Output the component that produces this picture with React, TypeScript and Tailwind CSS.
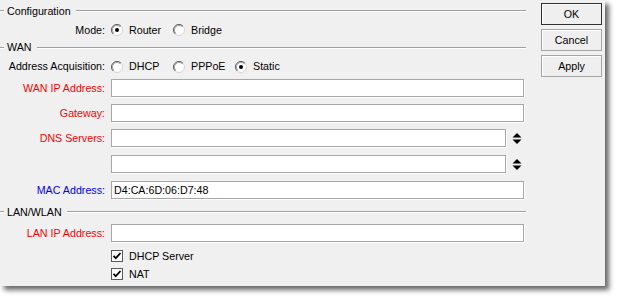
import React from "react";

function Radio({ checked }: { checked?: boolean }) {
  return (
    <svg width="12" height="12" viewBox="0 0 12 12" className="shrink-0">
      <circle cx="6" cy="6" r="5.5" fill="#ffffff" stroke="#d4d4d4" />
      <path d="M 2.1 9.9 A 5.5 5.5 0 0 1 9.9 2.1" stroke="#5a5a5a" strokeWidth="1" fill="none" />
      <path d="M 2.8 9.2 A 4.5 4.5 0 0 1 9.2 2.8" stroke="#a0a0a0" strokeWidth="1" fill="none" />
      {checked && <circle cx="6" cy="6" r="2" fill="#000000" />}
    </svg>
  );
}

function Check() {
  return (
    <div className="w-[12px] h-[12px] bg-white border border-[#5a5a5a] shrink-0 flex items-center justify-center">
      <svg width="10" height="10" viewBox="0 0 10 10">
        <path d="M1.5 4.8 L3.8 7.2 L8.5 2" stroke="#000" strokeWidth="1.8" fill="none" />
      </svg>
    </div>
  );
}

function Spin() {
  return (
    <svg width="10" height="13" viewBox="0 0 10 13" className="shrink-0">
      <polygon points="0.5,5.5 5,1 9.5,5.5" fill="#000" />
      <polygon points="0.5,7.5 5,12 9.5,7.5" fill="#000" />
    </svg>
  );
}

function Header({ title, h, mt = "" }: { title: string; h: string; mt?: string }) {
  return (
    <div className={`flex items-center ${h} ${mt}`}>
      <div className="w-[4px] border-t border-b border-t-[#a0a0a0] border-b-white" />
      <span className="pl-[3px] pr-[5px] text-black leading-none">{title}</span>
      <div className="flex-1 border-t border-b border-t-[#a0a0a0] border-b-white" />
    </div>
  );
}

function Field({
  label,
  color,
  mt,
  value,
  spin,
}: {
  label: string;
  color: string;
  mt: string;
  value?: string;
  spin?: boolean;
}) {
  return (
    <div className={`flex items-center h-[18px] ${mt}`}>
      <div className={`w-[106px] text-right pr-[1px] ${color} leading-none`}>{label}</div>
      <div className="w-[5px]" />
      {spin ? (
        <div className="flex items-center">
          <div className="w-[395px] h-[18px] bg-white border border-[#a7a7a7] shadow-[1px_1px_0_#ffffff]" />
          <div className="w-[6px]" />
          <Spin />
        </div>
      ) : (
        <div className="w-[413px] h-[18px] bg-white border border-[#a7a7a7] shadow-[1px_1px_0_#ffffff] flex items-center pl-[2px] text-black leading-none">
          {value}
        </div>
      )}
    </div>
  );
}

function Opt({ label, checked, w = "w-[62px]" }: { label: string; checked?: boolean; w?: string }) {
  return (
    <div className={`flex items-center gap-[6px] ${w}`}>
      <Radio checked={checked} />
      <span className="leading-none">{label}</span>
    </div>
  );
}

function Btn({ label, def }: { label: string; def?: boolean }) {
  return (
    <div
      className={`w-[61px] h-[22px] flex items-center justify-center bg-[#efefef] border ${
        def ? "border-[#303030]" : "border-[#a5a5a5]"
      } shadow-[inset_1px_1px_0_#ffffff] text-black leading-none`}
    >
      {label}
    </div>
  );
}

export default function App() {
  return (
    <div className="w-[620px] h-[301px] bg-white font-['Liberation_Sans',Arial,sans-serif] text-[10.7px] text-black">
      <div className="w-[605px] h-[286px] bg-[#f0f0f0] shadow-[4px_4px_5px_rgba(0,0,0,0.6)] flex">
        <div className="w-[526px] flex flex-col">
          <Header title="Configuration" h="h-[22px]" />
          <div className="flex items-center h-[16px]">
            <div className="w-[106px] text-right pr-[1px] leading-none">Mode:</div>
            <div className="w-[5px]" />
            <Opt label="Router" checked />
            <Opt label="Bridge" />
          </div>
          <Header title="WAN" h="h-[19px]" />
          <div className="flex items-center h-[19px]">
            <div className="w-[106px] text-right pr-[1px] leading-none">Address Acquisition:</div>
            <div className="w-[5px]" />
            <Opt label="DHCP" />
            <Opt label="PPPoE" />
            <Opt label="Static" checked />
          </div>
          <Field label="WAN IP Address:" color="text-[#ff0000]" mt="mt-[3px]" />
          <Field label="Gateway:" color="text-[#ff0000]" mt="mt-[7px]" />
          <Field label="DNS Servers:" color="text-[#ff0000]" mt="mt-[7px]" spin />
          <Field label="" color="" mt="mt-[8px]" spin />
          <Field label="MAC Address:" color="text-[#0000ff]" mt="mt-[8px]" value="D4:CA:6D:06:D7:48" />
          <Header title="LAN/WLAN" h="h-[22px]" mt="mt-[2px]" />
          <Field label="LAN IP Address:" color="text-[#ff0000]" mt="mt-[1px]" />
          <div className="flex items-center h-[16px] mt-[6px]">
            <div className="w-[111px]" />
            <Check />
            <span className="ml-[6px] leading-none">DHCP Server</span>
          </div>
          <div className="flex items-center h-[16px] mt-[2px]">
            <div className="w-[111px]" />
            <Check />
            <span className="ml-[6px] leading-none">NAT</span>
          </div>
        </div>
        <div className="flex flex-col gap-[4px] pl-[15px] pt-[3px]">
          <Btn label="OK" def />
          <Btn label="Cancel" />
          <Btn label="Apply" />
        </div>
      </div>
    </div>
  );
}
